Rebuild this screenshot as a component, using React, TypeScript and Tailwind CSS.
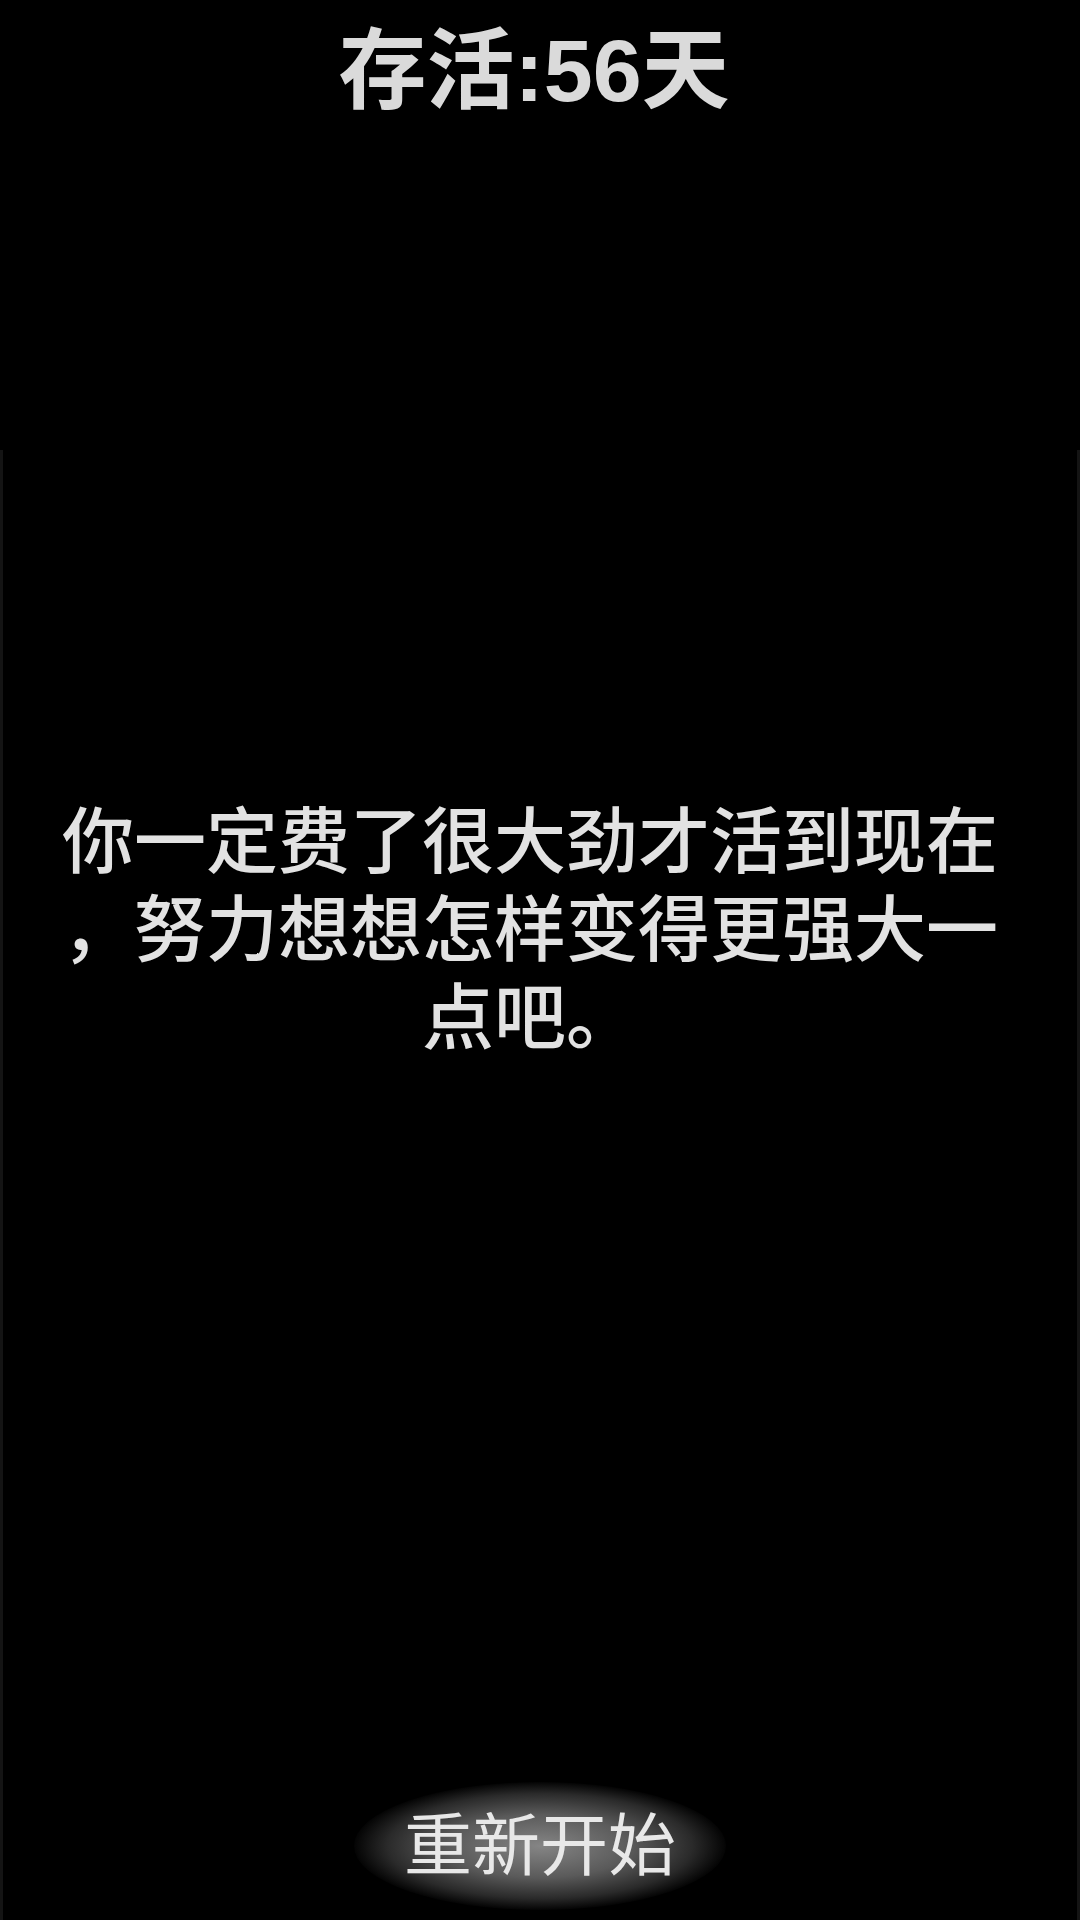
const FONT = { fontFamily: '"Liberation Sans", "Noto Sans CJK SC", sans-serif' }

const lines = ['你一定费了很大劲才活到现在', '，努力想想怎样变得更强大一', '点吧。']

export default function App() {
  return (
    <div className="w-[1080px] h-[1920px] bg-black flex flex-col overflow-hidden" style={FONT}>
      <header className="h-[450px] flex justify-center pt-[27px] pr-3">
        <h1 className="text-[88px] leading-none font-bold text-[#dadada]">存活:56天</h1>
      </header>

      <main className="flex-1 flex flex-col border-x-[3px] border-[#141414]">
        <div className="pt-[348px] pr-5 flex flex-col items-center text-[72px] leading-[88px] font-medium text-[#e2e2e2]">
          {lines.map((line) => (
            <p key={line} className="whitespace-nowrap">
              {line}
            </p>
          ))}
        </div>

        <div className="mt-auto flex justify-center pb-[10px]">
          <button
            type="button"
            className="px-[50px] py-[30px] rounded-[50%] bg-[radial-gradient(ellipse_at_center,#858585_0%,#5a5a5a_35%,#2a2a2a_58%,#000000_72%)] text-[68px] leading-none font-normal text-[#e8e8e8]"
          >
            重新开始
          </button>
        </div>
      </main>
    </div>
  )
}
